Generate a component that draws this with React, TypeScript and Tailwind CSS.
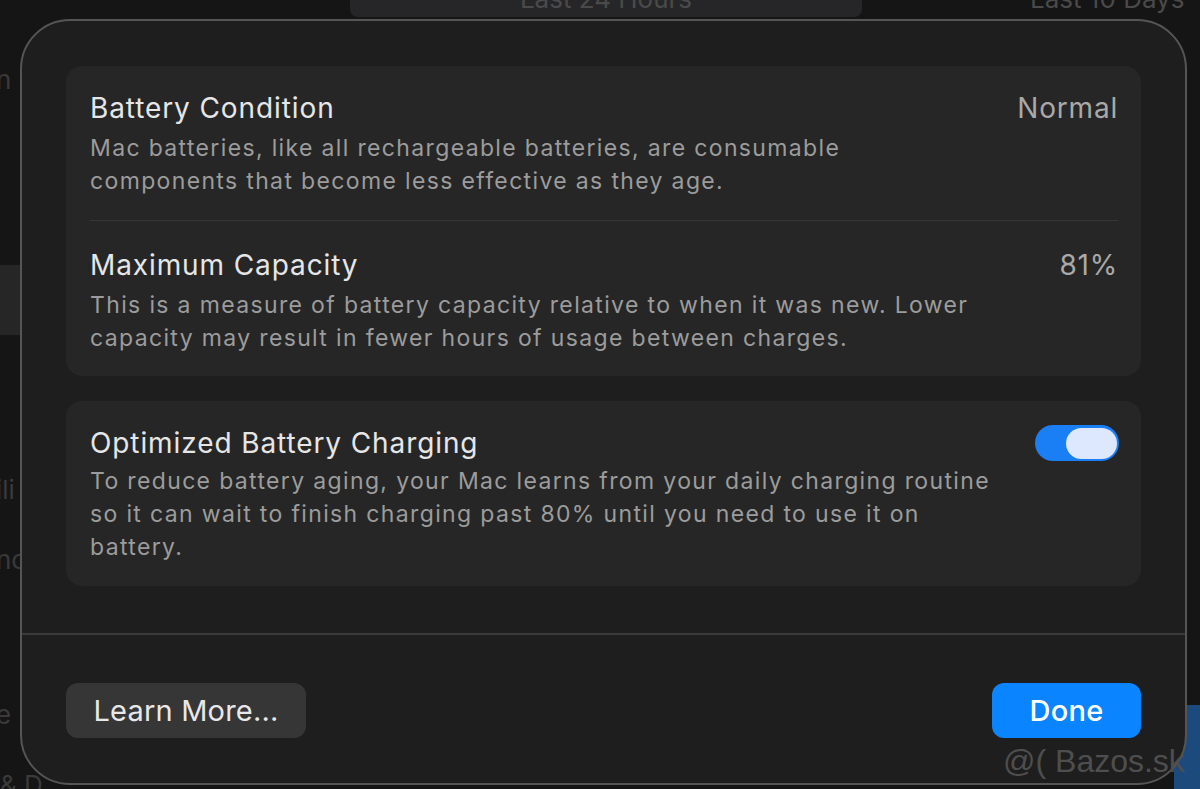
const font = { fontFamily: 'Inter, "Noto Sans", sans-serif' }

function Row({ title, value, desc, width }: { title: string; value: string; desc: string; width: string }) {
  return (
    <div className="flex items-start justify-between">
      <div className="flex-1">
        <div className="text-[28px] leading-[36px] tracking-[0.9px] text-[#e6e6e6] mb-[6px]">{title}</div>
        <div className={`text-[23px] leading-[33px] tracking-[1.35px] text-[#9c9c9c] ${width}`}>{desc}</div>
      </div>
      <div className="text-[28px] leading-[36px] tracking-[0.8px] text-[#a9a9a9]">{value}</div>
    </div>
  )
}

export default function App() {
  return (
    <div className="relative w-[1200px] h-[789px] overflow-hidden bg-[#151515]" style={font}>
      {/* backdrop: app behind the sheet */}
      <div className="absolute left-[350px] top-[-20px] w-[512px] h-[37px] rounded-lg bg-[#262628] flex items-center justify-center text-[26px] text-[#4a4a4a]">
        Last 24 Hours
      </div>
      <div className="absolute left-[1030px] top-[-20px] text-[26px] leading-[37px] text-[#4a4a4a] whitespace-nowrap">Last 10 Days</div>
      <div className="absolute left-0 top-[265px] w-[20px] h-[70px] bg-[#262626]" />
      <div className="absolute left-[-4px] top-[60px] text-[26px] text-[#3a3a3a]">n</div>
      <div className="absolute left-[-4px] top-[470px] text-[26px] text-[#3a3a3a]">ili</div>
      <div className="absolute left-[-4px] top-[540px] text-[26px] text-[#3a3a3a]">nc</div>
      <div className="absolute left-[-4px] top-[695px] text-[26px] text-[#3a3a3a]">e</div>
      <div className="absolute left-0 top-[765px] text-[26px] text-[#3a3a3a] whitespace-nowrap">& D</div>
      <div className="absolute right-0 top-[705px] w-[26px] h-[84px] bg-[#1d4a7c]" />

      {/* sheet */}
      <div className="relative z-10 ml-[20px] mt-[19px] w-[1167px] h-[766px] rounded-[50px] border-2 border-[#555555] bg-[#1e1e1e] flex flex-col">
        <div className="px-[44px] pt-[45px] pb-[47px] flex flex-col gap-[25px]">
          <div className="rounded-[16px] bg-[#262626] pl-[24px] pr-[23px]">
            <div className="pt-[24px] pb-[22px]">
              <Row
                title="Battery Condition"
                value="Normal"
                width="max-w-[840px]"
                desc="Mac batteries, like all rechargeable batteries, are consumable components that become less effective as they age."
              />
            </div>
            <div className="h-px bg-[#373737]" />
            <div className="pt-[26px] pb-[21px]">
              <Row
                title="Maximum Capacity"
                value="81%"
                width="max-w-[900px]"
                desc="This is a measure of battery capacity relative to when it was new. Lower capacity may result in fewer hours of usage between charges."
              />
            </div>
          </div>

          <div className="rounded-[16px] bg-[#262626] pl-[24px] pr-[22px] pt-[24px] pb-[22px] flex items-start justify-between">
            <div className="flex-1">
              <div className="text-[28px] leading-[36px] tracking-[0.9px] text-[#e6e6e6] mb-[4px]">Optimized Battery Charging</div>
              <div className="text-[23px] leading-[33px] tracking-[1.35px] text-[#9c9c9c] max-w-[908px]">
                To reduce battery aging, your Mac learns from your daily charging routine so it can wait to finish charging past 80% until you need to use it on battery.
              </div>
            </div>
            <div className="w-[84px] h-[36px] rounded-full bg-[#1a7ef5] flex items-center justify-end pr-[2px]">
              <div className="w-[51px] h-[31px] rounded-full bg-[#dde8ff]" />
            </div>
          </div>
        </div>

        <div className="h-[2px] bg-[#3a3a3a]" />

        <div className="px-[44px] pt-[48px] flex items-center justify-between">
          <button className="h-[55px] w-[240px] rounded-[12px] bg-[#363636] text-[29px] tracking-[0.2px] text-[#e8e8e8]">
            Learn More...
          </button>
          <button className="h-[55px] w-[149px] rounded-[12px] bg-[#0a84ff] text-[29px] tracking-[0.3px] font-medium text-white">
            Done
          </button>
        </div>
      </div>

      <div
        className="absolute z-20 left-[1003px] top-[741px] text-[32px] leading-[40px] text-[#4e4e4e] whitespace-nowrap"
        style={{ fontFamily: '"Liberation Sans", sans-serif' }}
      >
        @( Bazos.sk
      </div>
    </div>
  )
}
